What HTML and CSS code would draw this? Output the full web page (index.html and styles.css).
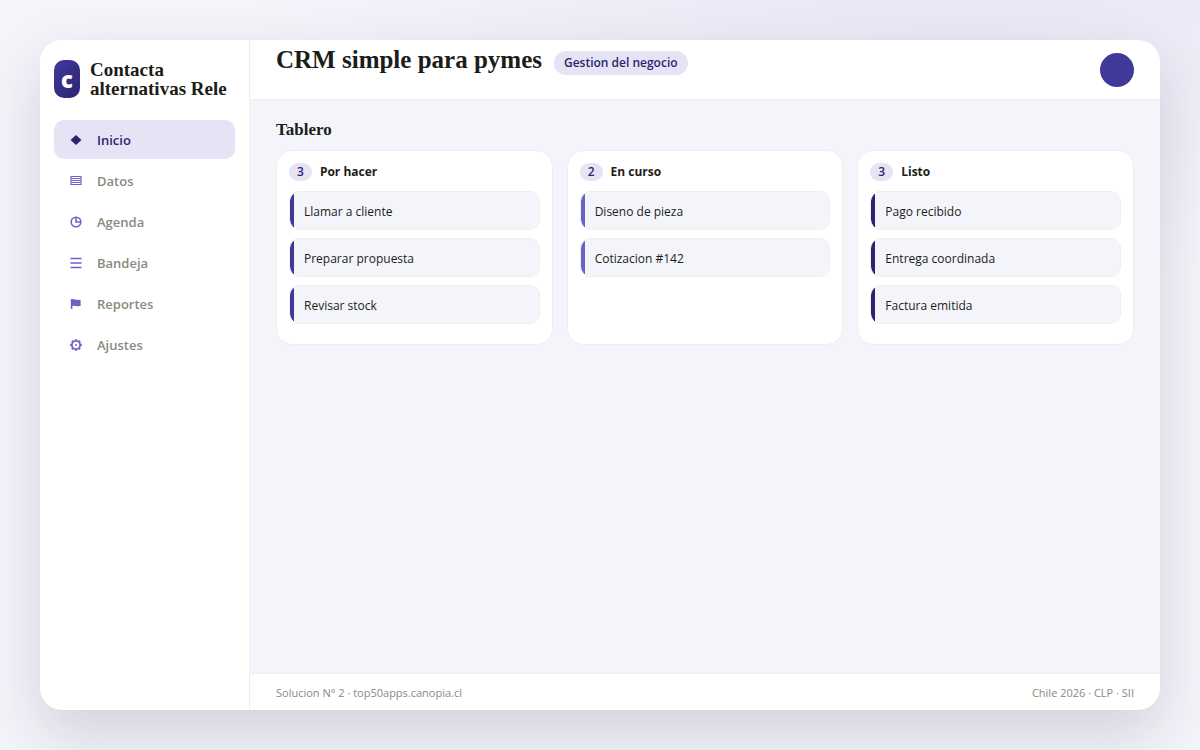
FILE: index.html
```
<!DOCTYPE html>
<html lang="es">
<head>
<meta charset="UTF-8">
<meta name="viewport" content="width=device-width, initial-scale=1.0">
<title>CRM simple para pymes</title>
<link rel="stylesheet" href="styles.css">
</head>
<body>

<div class="app">
  <aside class="sidebar">
    <div class="brand">
      <span class="logo">c</span>
      <span class="brand-name">Contacta alternativas Rele</span>
    </div>
    <nav class="menu">
      <a class="active" href="#inicio">
        <svg viewBox="0 0 12 12"><path d="M6 1 L11.5 6 L6 11 L0.5 6 Z" fill="currentColor"/></svg>
        Inicio
      </a>
      <a href="#datos">
        <svg viewBox="0 0 12 12"><path stroke-width="1.1" d="M1 1.5H11V9.5H1ZM1 3.5H11M1 5.5H11M1 7.5H11"/></svg>
        Datos
      </a>
      <a href="#agenda">
        <svg viewBox="0 0 12 12"><circle cx="6" cy="6" r="4.8"/><path d="M6 1.2V6H10.8"/></svg>
        Agenda
      </a>
      <a href="#bandeja">
        <svg viewBox="0 0 12 12"><path d="M0.5 1.5H11.5M0.5 6H11.5M0.5 10.5H11.5"/></svg>
        Bandeja
      </a>
      <a href="#reportes">
        <svg viewBox="0 0 12 12"><path d="M1.6 1V11"/><path d="M1.6 1.2C4 0.6 5 2.4 10.6 1.8V8C6 8.6 5 7 1.6 8Z" fill="currentColor" stroke="none"/></svg>
        Reportes
      </a>
      <a href="#ajustes">
        <svg viewBox="0 0 12 12"><circle cx="6" cy="6" r="4"/><circle cx="6" cy="6" r="1" fill="currentColor" stroke="none"/><path stroke-width="2.4" d="M6 0.2V2M6 10V11.8M0.2 6H2M10 6H11.8M1.9 1.9L3.1 3.1M8.9 8.9L10.1 10.1M1.9 10.1L3.1 8.9M8.9 3.1L10.1 1.9"/></svg>
        Ajustes
      </a>
    </nav>
  </aside>

  <div class="main">
    <header class="topbar">
      <div class="heading">
        <h1>CRM simple para pymes</h1>
        <span class="tag">Gestion del negocio</span>
      </div>
      <span class="avatar"></span>
    </header>

    <main class="content">
      <h2>Tablero</h2>
      <div class="board">
        <section class="column todo">
          <h3><span class="count">3</span>Por hacer</h3>
          <ul>
            <li>Llamar a cliente</li>
            <li>Preparar propuesta</li>
            <li>Revisar stock</li>
          </ul>
        </section>
        <section class="column doing">
          <h3><span class="count">2</span>En curso</h3>
          <ul>
            <li>Diseno de pieza</li>
            <li>Cotizacion #142</li>
          </ul>
        </section>
        <section class="column done">
          <h3><span class="count">3</span>Listo</h3>
          <ul>
            <li>Pago recibido</li>
            <li>Entrega coordinada</li>
            <li>Factura emitida</li>
          </ul>
        </section>
      </div>
    </main>

    <footer class="footer">
      <span>Solucion N° 2 · top50apps.canopia.cl</span>
      <span>Chile 2026 · CLP · SII</span>
    </footer>
  </div>
</div>

</body>
</html>
```
FILE: styles.css
```
:root {
  --brand: #40399a;
  --brand-dark: #2c2470;
  --brand-mid: #6b63c4;
  --soft: #e6e4f4;
  --bg: #f4f5fb;
  --line: #eeeeec;
  --ink: #1c1c18;
  --muted: #8a8a7e;
}
* {
  box-sizing: border-box;
}
body {
  margin: 0;
  min-height: 100vh;
  padding: 40px;
  display: flex;
  font-family: "Open Sans", sans-serif;
  font-size: 12px;
  color: var(--ink);
  background: radial-gradient(1200px 600px at 80% -10%, var(--soft), var(--bg) 60%);
}
h1, h2, h3, ul {
  margin: 0;
  padding: 0;
}
h1, h2, .brand-name {
  font-family: Georgia, "Liberation Serif", serif;
  font-weight: 700;
}
.app {
  flex: 1;
  display: flex;
  background: #fff;
  border-radius: 22px;
  overflow: hidden;
  box-shadow: 0 24px 60px rgba(28, 20, 40, 0.16);
}

/* Sidebar */
.sidebar {
  width: 210px;
  padding: 20px 14px;
  border-right: 1px solid var(--line);
}
.brand {
  display: flex;
  align-items: center;
  gap: 10px;
  margin-bottom: 22px;
}
.logo {
  width: 26px;
  height: 38px;
  flex: none;
  display: flex;
  align-items: center;
  justify-content: center;
  border-radius: 10px;
  background: linear-gradient(135deg, var(--brand), var(--brand-dark));
  color: #fff;
  font-size: 22px;
  font-weight: 800;
}
.brand-name {
  font-size: 19px;
  line-height: 19px;
}
.menu {
  display: flex;
  flex-direction: column;
  gap: 2px;
}
.menu a {
  display: flex;
  align-items: center;
  gap: 15px;
  height: 39px;
  padding: 0 16px;
  border-radius: 10px;
  color: var(--muted);
  font-size: 13px;
  font-weight: 600;
  text-decoration: none;
}
.menu svg {
  width: 12px;
  height: 12px;
  color: var(--brand-mid);
  fill: none;
  stroke: currentColor;
  stroke-width: 1.6;
}
.menu .active {
  background: var(--soft);
  color: var(--brand-dark);
}
.menu .active svg {
  color: var(--brand-dark);
  stroke: none;
}

/* Main area */
.main {
  flex: 1;
  display: flex;
  flex-direction: column;
}
.topbar {
  display: flex;
  align-items: center;
  justify-content: space-between;
  height: 60px;
  padding: 0 26px;
  border-bottom: 1px solid var(--line);
}
.heading {
  align-self: flex-start;
  display: flex;
  align-items: flex-end;
  gap: 12px;
  padding-top: 5px;
}
h1 {
  font-size: 25px;
  line-height: 30px;
}
.tag {
  padding: 0 10px;
  border-radius: 12px;
  background: var(--soft);
  color: var(--brand-dark);
  font-weight: 600;
  line-height: 24px;
}
.avatar {
  width: 34px;
  height: 34px;
  border-radius: 50%;
  background: var(--brand);
}
.content {
  flex: 1;
  padding: 20px 26px;
  background: var(--bg);
}
h2 {
  margin-bottom: 10px;
  font-size: 17px;
  line-height: 20px;
}
.board {
  display: grid;
  grid-template-columns: repeat(3, 1fr);
  gap: 14px;
}
.column {
  padding: 12px 12px 20px;
  background: #fff;
  border: 1px solid var(--line);
  border-radius: 16px;
}
h3 {
  display: flex;
  align-items: center;
  gap: 8px;
  margin-bottom: 10px;
  font-size: 12px;
  line-height: 18px;
}
.count {
  padding: 0 8px;
  border-radius: 9px;
  background: var(--soft);
  color: var(--brand-dark);
  font-weight: 600;
}
.column ul {
  display: flex;
  flex-direction: column;
  gap: 8px;
  list-style: none;
}
/* coloured strip on the left edge of each card */
.column li {
  padding: 11px 14px 9px;
  border: 1px solid var(--line);
  border-radius: 10px;
  background: linear-gradient(90deg, var(--strip) 4px, var(--bg) 4px) padding-box;
  line-height: 17px;
}
.todo {
  --strip: var(--brand);
}
.doing {
  --strip: var(--brand-mid);
}
.done {
  --strip: var(--brand-dark);
}
.footer {
  display: flex;
  justify-content: space-between;
  padding: 11px 26px 9px;
  border-top: 1px solid var(--line);
  color: var(--muted);
  font-size: 11px;
  line-height: 16px;
}
```
